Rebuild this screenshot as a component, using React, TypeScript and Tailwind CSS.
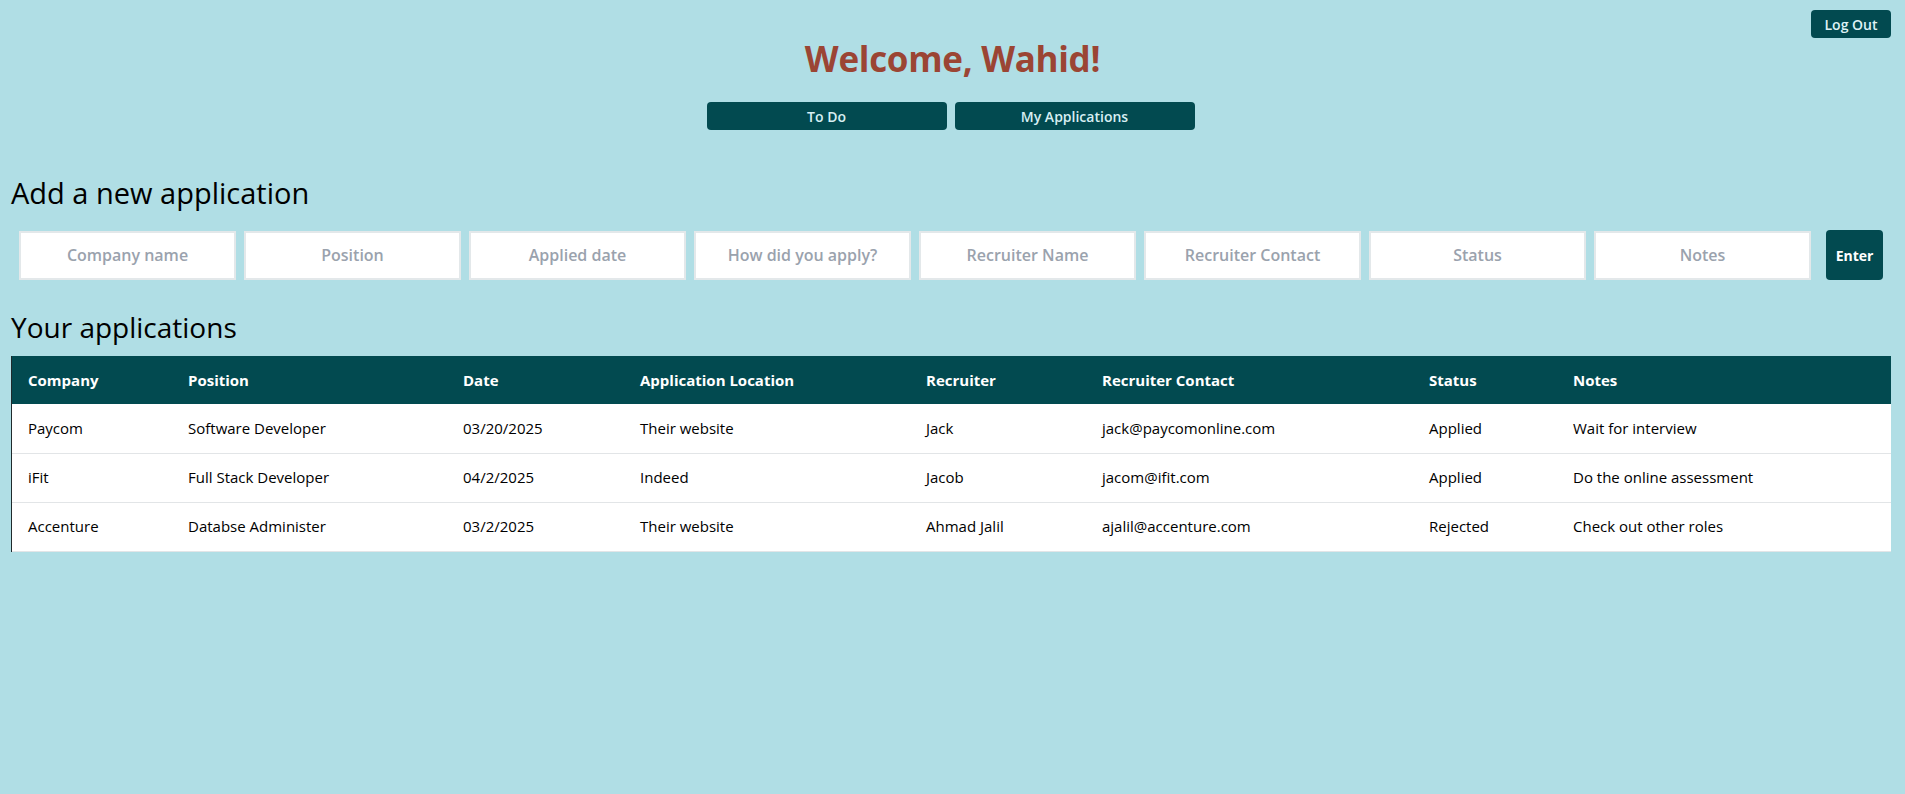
import React from "react";

const fields = [
  "Company name",
  "Position",
  "Applied date",
  "How did you apply?",
  "Recruiter Name",
  "Recruiter Contact",
  "Status",
  "Notes",
];

const headers = [
  { label: "Company", w: "w-[160px]" },
  { label: "Position", w: "w-[275px]" },
  { label: "Date", w: "w-[177px]" },
  { label: "Application Location", w: "w-[286px]" },
  { label: "Recruiter", w: "w-[176px]" },
  { label: "Recruiter Contact", w: "w-[327px]" },
  { label: "Status", w: "w-[144px]" },
  { label: "Notes", w: "w-[334px]" },
];

const rows = [
  ["Paycom", "Software Developer", "03/20/2025", "Their website", "Jack", "jack@paycomonline.com", "Applied", "Wait for interview"],
  ["iFit", "Full Stack Developer", "04/2/2025", "Indeed", "Jacob", "jacom@ifit.com", "Applied", "Do the online assessment"],
  ["Accenture", "Databse Administer", "03/2/2025", "Their website", "Ahmad Jalil", "ajalil@accenture.com", "Rejected", "Check out other roles"],
];

export default function App() {
  return (
    <div className="min-h-screen bg-[#b0dee5] font-['Open_Sans',sans-serif] text-black">
      <div className="flex justify-end pt-[10px] pr-[14px]">
        <button className="h-[28px] w-[80px] rounded-[4px] bg-[#024a50] text-[14px] font-semibold text-[#dff2f5]">
          Log Out
        </button>
      </div>
      <h1 className="mt-[3px] text-center text-[35px] leading-[36px] font-bold tracking-[-0.3px] text-[#9b4534]">
        Welcome, Wahid!
      </h1>
      <div className="mt-[25px] flex justify-center gap-2 pr-[4px]">
        <button className="h-[28px] w-[240px] rounded-[4px] bg-[#024a50] text-[14px] font-semibold text-[#d7eff3]">
          To Do
        </button>
        <button className="h-[28px] w-[240px] rounded-[4px] bg-[#024a50] text-[14px] font-semibold text-[#d7eff3]">
          My Applications
        </button>
      </div>

      <h2 className="mt-[48px] pl-[11px] text-[29px] leading-[29px] font-normal">
        Add a new application
      </h2>
      <div className="mt-[23px] flex items-center pl-[19px]">
        <div className="flex gap-2">
          {fields.map((f) => (
            <input
              key={f}
              placeholder={f}
              className="h-[49px] w-[217px] border-2 border-[#e3e8ea] bg-white text-center text-[16px] font-semibold text-black outline-none placeholder:text-[#9aa2ad]"
            />
          ))}
        </div>
        <button className="ml-[15px] h-[50px] w-[57px] rounded-[4px] bg-[#024a50] text-[14px] font-bold text-white">
          Enter
        </button>
      </div>

      <h2 className="mt-[33px] pl-[11px] text-[28px] leading-[28px] font-normal">
        Your applications
      </h2>
      <div className="mt-[15px] ml-[11px] w-[1880px] border-l border-[#1f2a2c]">
        <table className="w-full table-fixed border-collapse">
          <thead>
            <tr className="h-[48px] bg-[#024a50]">
              {headers.map((h) => (
                <th key={h.label} className={`${h.w} px-4 text-left text-[15px] font-bold text-white`}>
                  {h.label}
                </th>
              ))}
            </tr>
          </thead>
          <tbody>
            {rows.map((r, i) => (
              <tr key={i} className="h-[49px] border-b border-[#e2e5e7] bg-white">
                {r.map((c, j) => (
                  <td key={j} className="px-4 text-[15px] text-black">
                    {c}
                  </td>
                ))}
              </tr>
            ))}
          </tbody>
        </table>
      </div>
    </div>
  );
}
